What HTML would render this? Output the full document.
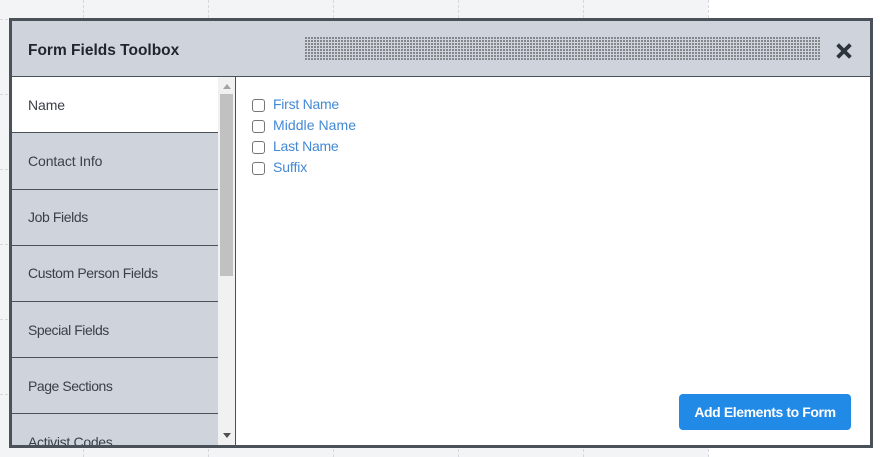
<!DOCTYPE html>
<html><head><meta charset="utf-8">
<style>
html,body{margin:0;padding:0;width:880px;height:457px;overflow:hidden;background:#fff;font-family:"Liberation Sans",sans-serif;}
div{box-sizing:border-box;position:absolute;}
.bg{left:0;top:0;width:708px;height:457px;background:#f3f4f6;}
.v{top:0;width:0;height:457px;border-left:1px dashed #d6d8db;}
.h{left:0;width:708px;height:0;border-top:1px dashed #d6d8db;}
.modal{left:9px;top:18px;width:864px;height:430px;border:3px solid #4b5159;background:#fff;overflow:hidden;}
.head{left:0;top:0;width:858px;height:56px;background:#cfd4dc;border-bottom:1px solid #4b5159;}
.title{left:16px;top:20px;font-size:15.5px;line-height:20px;font-weight:bold;color:#22262c;white-space:nowrap;}
.dots2{left:293px;top:16px;width:515px;height:23px;background:repeating-linear-gradient(90deg,#84878c 0 2px,#cfd4dc 2px 3px);}
.gap{left:293px;width:515px;height:1px;background:#cfd4dc;}
.item{left:0;width:206px;height:56px;background:#cfd4dc;border-bottom:1px solid #4b5159;font-size:14px;color:#3b4047;padding:0 0 0 16px;line-height:57px;white-space:nowrap;}
.track{left:206px;top:56px;width:17px;height:368px;background:#f1f1f1;}
.thumb{left:2px;top:17px;width:13px;height:182px;background:#c1c1c1;}
.up{left:4.5px;top:7px;width:0;height:0;border-left:4px solid transparent;border-right:4px solid transparent;border-bottom:5px solid #a3a3a3;}
.dn{left:4.5px;bottom:7px;width:0;height:0;border-left:4px solid transparent;border-right:4px solid transparent;border-top:5px solid #505050;}
.sep{left:223px;top:56px;width:1px;height:368px;background:#4b5159;}
.cb{left:240px;width:13px;height:13px;background:#fff;border:1px solid #767676;border-radius:3px;}
.lb{left:261px;font-size:14px;line-height:20px;color:#4389d4;white-space:nowrap;}
.btn{left:667px;top:373px;width:172px;height:36px;background:#2189e6;border-radius:4px;color:#fff;font-size:14px;font-weight:bold;line-height:36px;text-align:center;white-space:nowrap;letter-spacing:-.4px;}
svg{position:absolute;}
</style></head>
<body>
<div class="bg"></div>
<div class="v" style="left:83px"></div>
<div class="v" style="left:208px"></div>
<div class="v" style="left:333px"></div>
<div class="v" style="left:458px"></div>
<div class="v" style="left:583px"></div>
<div class="v" style="left:708px"></div>
<div class="h" style="top:19px"></div>
<div class="h" style="top:94px"></div>
<div class="h" style="top:169px"></div>
<div class="h" style="top:244px"></div>
<div class="h" style="top:319px"></div>
<div class="h" style="top:394px"></div>
<div class="modal">
  <div class="head">
    <div class="title">Form Fields Toolbox</div>
    <div class="dots2"></div>
    <div class="gap" style="top:18px"></div>
    <div class="gap" style="top:21px"></div>
    <div class="gap" style="top:24px"></div>
    <div class="gap" style="top:27px"></div>
    <div class="gap" style="top:30px"></div>
    <div class="gap" style="top:33px"></div>
    <div class="gap" style="top:36px"></div>
    <svg style="left:824px;top:21.5px" width="16" height="16" viewBox="0 0 16 16"><path d="M1.6 1.6L14.4 14.4M14.4 1.6L1.6 14.4" stroke="#2c343d" stroke-width="3.8" fill="none"/></svg>
  </div>
  <div class="item" style="top:56px;background:#fff;letter-spacing:-.1px">Name</div>
  <div class="item" style="top:112px;height:57px;letter-spacing:-.1px">Contact Info</div>
  <div class="item" style="top:169px;line-height:55px;letter-spacing:-.4px">Job Fields</div>
  <div class="item" style="top:225px;line-height:55px;letter-spacing:-.4px">Custom Person Fields</div>
  <div class="item" style="top:281px;letter-spacing:-.45px">Special Fields</div>
  <div class="item" style="top:337px;letter-spacing:-.45px">Page Sections</div>
  <div class="item" style="top:393px;letter-spacing:-.3px">Activist Codes</div>
  <div class="track"><div class="up"></div><div class="thumb"></div><div class="dn"></div></div>
  <div class="sep"></div>
  <div class="cb" style="top:78px"></div><div class="lb" style="top:73px;letter-spacing:-.25px">First Name</div>
  <div class="cb" style="top:99px"></div><div class="lb" style="top:94px;letter-spacing:.05px">Middle Name</div>
  <div class="cb" style="top:120px"></div><div class="lb" style="top:115px;letter-spacing:-.25px">Last Name</div>
  <div class="cb" style="top:141px"></div><div class="lb" style="top:136px;letter-spacing:-.1px">Suffix</div>
  <div class="btn">Add Elements to Form</div>
</div>
</body></html>
